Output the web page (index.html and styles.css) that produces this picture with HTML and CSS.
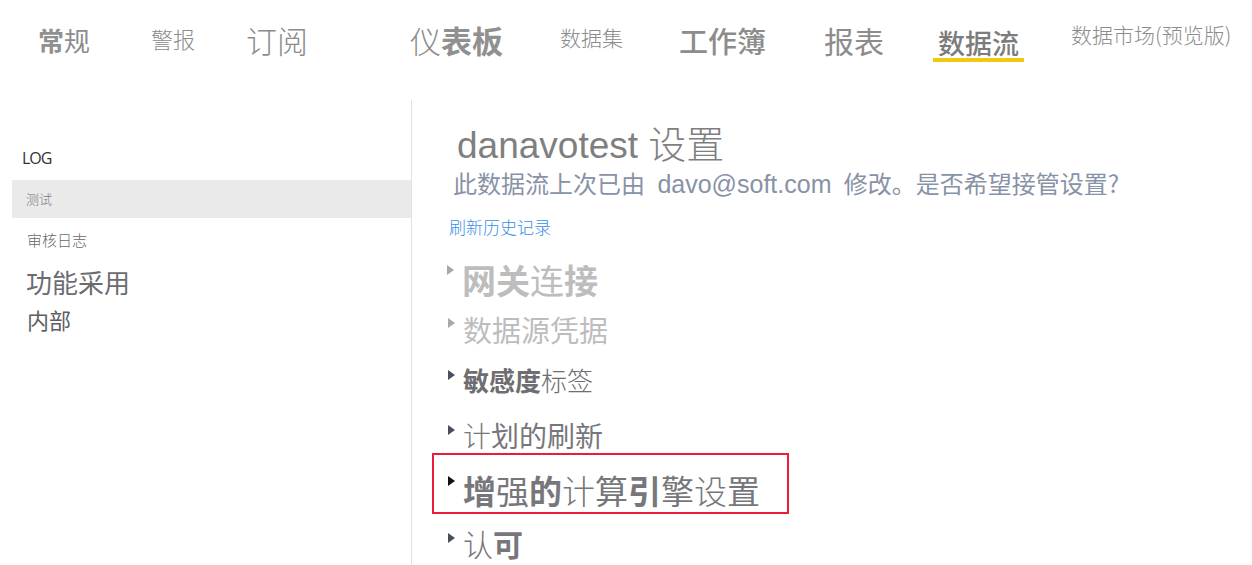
FILE: index.html
```html
<!DOCTYPE html>
<html lang="zh-CN">
<head>
    <meta charset="UTF-8">
    <meta name="viewport" content="width=device-width, initial-scale=1.0">
    <title>数据流设置</title>
    <link rel="stylesheet" href="styles.css">
</head>
<body>
    <nav class="tabs">
        <span class="tab tab-general"><b>常</b>规</span>
        <span class="tab tab-alerts">警报</span>
        <span class="tab tab-subs">订阅</span>
        <span class="tab tab-dash">仪<b>表板</b></span>
        <span class="tab tab-datasets">数据集</span>
        <span class="tab tab-workbooks">工作簿</span>
        <span class="tab tab-reports">报表</span>
        <span class="tab tab-dataflows active">数据流</span>
        <span class="tab tab-market">数据市场(预览版)</span>
    </nav>

    <div class="page">
        <aside class="sidebar">
            <div class="side-log">LOG</div>
            <div class="side-item selected">测试</div>
            <div class="side-audit">审核日志</div>
            <div class="side-adoption">功能采用</div>
            <div class="side-internal">内部</div>
        </aside>

        <main class="content">
            <h1 class="title">danavotest <span class="title-cjk">设置</span></h1>
            <p class="notice">此数据流上次已由 <span class="latin">davo@soft.com</span> 修改。是否希望接管设置?</p>
            <a class="history-link" href="#">刷新历史记录</a>

            <div class="section s-gateway disabled">
                <span class="caret"></span>
                <span class="label"><b>网关</b>连<b>接</b></span>
            </div>
            <div class="section s-credentials disabled">
                <span class="caret"></span>
                <span class="label">数据源凭据</span>
            </div>
            <div class="section s-sensitivity">
                <span class="caret dark"></span>
                <span class="label"><b>敏感度</b><i>标签</i></span>
            </div>
            <div class="section s-refresh">
                <span class="caret dark"></span>
                <span class="label"><i>计</i>划的刷新</span>
            </div>
            <div class="section s-engine highlighted">
                <span class="caret black"></span>
                <span class="label"><b>增</b>强<b>的</b><i>计</i>算<b>引</b>擎<i>设</i>置</span>
            </div>
            <div class="section s-endorse">
                <span class="caret dark"></span>
                <span class="label"><i>认</i><b>可</b></span>
            </div>
        </main>
    </div>
</body>
</html>
```

FILE: styles.css
```css
body {
    margin: 0;
    font-family: "Noto Sans CJK SC", "Noto Sans", sans-serif;
    background: #ffffff;
    color: #777777;
    overflow: hidden;
}

b {
    font-weight: 700;
}

i {
    font-style: normal;
    font-weight: 300;
}

/* top tab strip */
.tabs {
    display: flex;
    align-items: center;
    height: 80px;
    padding-left: 38px;
    white-space: nowrap;
}

.tab {
    color: #8c8c8c;
    line-height: 1.2;
}

.tab b {
    color: #909090;
}

.tab-general {
    font-size: 26px;
    font-weight: 400;
}

.tab-alerts {
    font-size: 22px;
    font-weight: 300;
    margin-left: 61px;
    margin-bottom: 4px;
}

.tab-subs {
    font-size: 31px;
    font-weight: 300;
    margin-left: 51px;
}

.tab-dash {
    font-size: 31px;
    font-weight: 300;
    margin-left: 102px;
}

.tab-datasets {
    font-size: 21px;
    font-weight: 300;
    margin-left: 57px;
    margin-bottom: 4px;
}

.tab-workbooks {
    font-size: 29px;
    font-weight: 500;
    margin-left: 56px;
}

.tab-reports {
    font-size: 30px;
    font-weight: 400;
    margin-left: 58px;
}

.tab-dataflows {
    font-size: 27px;
    font-weight: 500;
    margin-left: 49px;
    padding: 0 5px;
    line-height: 31px;
    margin-top: 8px;
    color: #7c7c7c;
}

.tab-dataflows.active {
    border-bottom: 4px solid #f2c811;
}

.tab-market {
    font-size: 21px;
    font-weight: 300;
    margin-left: 47px;
    margin-bottom: 10px;
}

/* page body */
.page {
    display: flex;
    margin-top: 20px;
    height: 465px;
}

.sidebar {
    width: 400px;
    margin-left: 12px;
    padding-top: 48px;
    border-right: 1px solid #e1e1e1;
    box-sizing: border-box;
}

.side-log {
    font-family: "Open Sans", "Noto Sans", sans-serif;
    font-size: 16px;
    line-height: 20px;
    color: #333333;
    padding-left: 10px;
    letter-spacing: -1px;
}

.side-item {
    margin-top: 12px;
    height: 38px;
    line-height: 38px;
    padding-left: 14px;
    font-size: 13px;
    font-weight: 300;
    color: #7a7a7a;
}

.side-item.selected {
    background: #eaeaea;
}

.side-audit {
    margin-top: 12px;
    padding-left: 15px;
    font-size: 15px;
    line-height: 20px;
    font-weight: 300;
    color: #6a6a6a;
}

.side-adoption {
    margin-top: 16px;
    padding-left: 14px;
    font-size: 26px;
    line-height: 32px;
    color: #6c6c70;
}

.side-internal {
    margin-top: 7px;
    padding-left: 15px;
    font-size: 22px;
    line-height: 28px;
    color: #5e5e62;
}

/* settings column */
.content {
    flex: 1;
    padding-top: 20px;
    padding-left: 36px;
}

.title {
    margin: 0 0 0 9px;
    font-family: "Liberation Sans", Arial, sans-serif;
    font-weight: 400;
    font-size: 37px;
    line-height: 44px;
    color: #7f7f7f;
}

.title-cjk {
    font-family: "Noto Sans CJK SC", sans-serif;
    font-weight: 300;
    font-size: 38px;
}

.notice {
    margin: 0 0 0 5px;
    font-size: 24px;
    line-height: 30px;
    color: #8892a6;
    white-space: nowrap;
    word-spacing: 7px;
}

.notice .latin {
    font-family: "Liberation Sans", Arial, sans-serif;
    font-size: 25px;
}

.history-link {
    display: block;
    margin-top: 17px;
    margin-left: 1px;
    font-size: 17px;
    line-height: 22px;
    font-weight: 300;
    color: #3a8ee6;
    text-decoration: none;
}

.section {
    display: flex;
    align-items: center;
    color: #77777b;
    white-space: nowrap;
}

.caret {
    flex: none;
    width: 0;
    height: 0;
    border-top: 5px solid transparent;
    border-bottom: 5px solid transparent;
    border-left: 7px solid #a8a8a8;
    margin-right: 8px;
    margin-bottom: 20px;
}

.caret.dark {
    border-left-color: #4a4f5e;
    margin-bottom: 10px;
}

.caret.black {
    border-left-color: #111111;
    margin-bottom: 18px;
}

.section.disabled {
    color: #bdbdbd;
}

.s-gateway {
    margin-top: 21px;
    font-size: 34px;
    line-height: 42px;
    margin-left: -1px;
}

.s-credentials {
    margin-top: 10px;
    font-size: 29px;
    line-height: 36px;
}

.s-credentials .caret {
    margin-bottom: 12px;
}

.s-sensitivity {
    margin-top: 16px;
    font-size: 26px;
    line-height: 34px;
    color: #6e6e72;
}

.s-refresh {
    margin-top: 20px;
    font-size: 28px;
    line-height: 36px;
}

.s-engine {
    font-size: 33px;
    line-height: 40px;
}

.section.highlighted {
    align-self: flex-start;
    width: fit-content;
    margin-left: -16px;
    padding: 15px 27px 2px 14px;
    border: 2px solid #ee1c3c;
}

.s-endorse {
    margin-top: 11px;
    font-size: 30px;
    line-height: 36px;
}
```
